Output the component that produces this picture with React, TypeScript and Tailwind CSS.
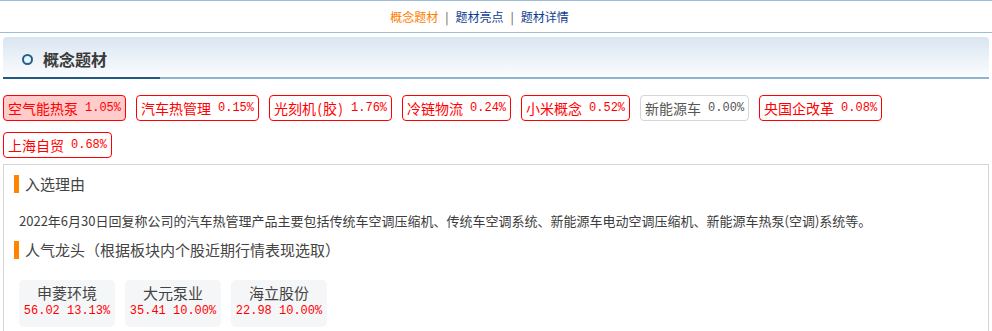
const tags = [
  { name: "空气能热泵", pct: "1.05%", active: true },
  { name: "汽车热管理", pct: "0.15%" },
  { name: "光刻机(胶)", pct: "1.76%" },
  { name: "冷链物流", pct: "0.24%" },
  { name: "小米概念", pct: "0.52%" },
  { name: "新能源车", pct: "0.00%", flat: true },
  { name: "央国企改革", pct: "0.08%" },
  { name: "上海自贸", pct: "0.68%" },
];

const leaders = [
  { name: "申菱环境", price: "56.02", pct: "13.13%" },
  { name: "大元泵业", price: "35.41", pct: "10.00%" },
  { name: "海立股份", price: "22.98", pct: "10.00%" },
];

const cjk = "font-['Noto_Sans_CJK_SC','Noto_Sans',sans-serif]";
const mono = "font-['Liberation_Mono','Noto_Sans_CJK_SC',monospace]";

// half-width brackets take 7px in the original font
function TagName({ text }: { text: string }) {
  const parts = text.split(/([()])/).filter(Boolean);
  return (
    <span className="text-[14px] leading-[24px]">
      {parts.map((p, i) =>
        p === "(" || p === ")" ? (
          <span key={i} className="inline-block w-[7px] text-center">
            {p}
          </span>
        ) : (
          <span key={i}>{p}</span>
        )
      )}
    </span>
  );
}

function SubTitle({ children }: { children: React.ReactNode }) {
  return (
    <div className="flex items-center h-[18px] gap-[6px]">
      <span className="w-[5px] h-[18px] bg-[#ff8400]" />
      <span className="text-[15px] leading-[18px] text-[#444]">{children}</span>
    </div>
  );
}

export default function App() {
  return (
    <div className={`w-[992px] h-[331px] overflow-hidden bg-white ${cjk}`}>
      {/* Top nav */}
      <div className="h-[33px] border-y border-[#9dbdd8] flex items-center justify-center pr-[33px] text-[12px] leading-[20px]">
        <span className="text-[#ff7e00]">概念题材</span>
        <span className="mx-[7px] text-[#555]">|</span>
        <span className="text-[#0f3d8f]">题材亮点</span>
        <span className="mx-[7px] text-[#555]">|</span>
        <span className="text-[#0f3d8f]">题材详情</span>
      </div>

      <div className="mx-[3px] mt-[4px]">
        {/* Section header */}
        <div className="h-[40px] rounded-t-[4px] bg-gradient-to-b from-[#dae5f1] to-[#fbfdfe] flex items-center pl-[19px] pt-[4px] gap-[10px]">
          <span className="w-[11px] h-[11px] rounded-full border-2 border-[#22608b]" />
          <span className="text-[16px] leading-[20px] font-bold text-[#3a3a3a]">概念题材</span>
        </div>
        <div className="flex h-[2px]">
          <div className="w-[157px] bg-[#1f5a84]" />
          <div className="flex-1 bg-[#8fb4d0]" />
        </div>

        {/* Concept tags */}
        <div className="mt-[16px] flex flex-wrap gap-x-[10px] gap-y-[11px]">
          {tags.map((t) => (
            <div
              key={t.name}
              className={`h-[26px] px-[4px] flex items-center rounded-[4px] border ${
                t.flat
                  ? "border-[#d6d6d6] text-[#555]"
                  : t.active
                  ? "border-[#ff0000] bg-[#ffcccc] text-[#ff0000]"
                  : "border-[#ff0000] text-[#ff0000]"
              }`}
            >
              <TagName text={t.name} />
              <span className={`ml-[7px] text-[12px] leading-[24px] ${mono}`}>{t.pct}</span>
            </div>
          ))}
        </div>

        {/* Reason box */}
        <div className="mt-[6px] border border-[#d6d6d6] pl-[10px] pt-[10px] h-[200px]">
          <SubTitle>入选理由</SubTitle>
          <p className="mt-[18px] ml-[5px] text-[13px] leading-[20px] text-[#3d3d3d]">
            2022年6月30日回复称公司的汽车热管理产品主要包括传统车空调压缩机、传统车空调系统、新能源车电动空调压缩机、新能源车热泵(空调)系统等。
          </p>
          <div className="mt-[10px]">
            <SubTitle>人气龙头（根据板块内个股近期行情表现选取）</SubTitle>
          </div>
          <div className="mt-[21px] ml-[5px] flex gap-[10px]">
            {leaders.map((s) => (
              <div
                key={s.name}
                className="w-[96px] h-[47px] rounded-[5px] bg-[#f5f6f8] flex flex-col items-center pt-[3px]"
              >
                <span className="text-[15px] leading-[20px] text-[#444]">{s.name}</span>
                <span className={`text-[12px] leading-[16px] text-[#ff0000] ${mono}`}>
                  {s.price} {s.pct}
                </span>
              </div>
            ))}
          </div>
        </div>
      </div>
    </div>
  );
}
